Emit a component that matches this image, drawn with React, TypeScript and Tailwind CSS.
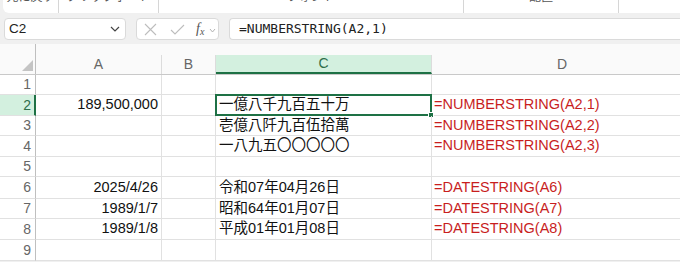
import React from "react";

const FONT = "font-['Liberation_Sans','Noto_Sans_CJK_JP',sans-serif]";

type Row = { n: number; a?: string; c?: string; d?: string; h: string };

const rows: Row[] = [
  { n: 1, h: "h-[20px]" },
  { n: 2, a: "189,500,000", c: "一億八千九百五十万", d: "=NUMBERSTRING(A2,1)", h: "h-[21px]" },
  { n: 3, c: "壱億八阡九百伍拾萬", d: "=NUMBERSTRING(A2,2)", h: "h-[20px]" },
  { n: 4, c: "一八九五〇〇〇〇〇", d: "=NUMBERSTRING(A2,3)", h: "h-[21px]" },
  { n: 5, h: "h-[20px]" },
  { n: 6, a: "2025/4/26", c: "令和07年04月26日", d: "=DATESTRING(A6)", h: "h-[22px]" },
  { n: 7, a: "1989/1/7", c: "昭和64年01月07日", d: "=DATESTRING(A7)", h: "h-[20px]" },
  { n: 8, a: "1989/1/8", c: "平成01年01月08日", d: "=DATESTRING(A8)", h: "h-[21px]" },
  { n: 9, h: "h-[21px]" },
];

export default function App() {
  return (
    <div className={`w-[680px] h-[262px] overflow-hidden bg-[#f0f0f0] ${FONT}`}>
      {/* Ribbon group labels (cut off at top) */}
      <div className="ml-[3px] h-[13px] bg-white rounded-bl-[6px] overflow-hidden flex text-[12px] text-[#555]">
        <div className="w-[56px] h-[13px] border-r border-[#d6d6d6] flex justify-center">
          <span className="-mt-[11px] leading-[16px]">元に戻す</span>
        </div>
        <div className="w-[100px] h-[13px] border-r border-[#d6d6d6] flex justify-center">
          <span className="-mt-[11px] leading-[16px]">クリップボード</span>
        </div>
        <div className="w-[305px] h-[13px] border-r border-[#d6d6d6] flex justify-center">
          <span className="-mt-[11px] leading-[16px]">フォント</span>
        </div>
        <div className="w-[155px] h-[13px] border-r border-[#d6d6d6] flex justify-center">
          <span className="-mt-[11px] leading-[16px]">配置</span>
        </div>
        <div className="flex-1" />
      </div>

      {/* Formula bar */}
      <div className="mt-[5px] h-[22px] flex pl-[4px] gap-[10px]">
        <div className="w-[122px] h-[22px] bg-white border border-[#dadada] rounded-[4px] flex items-center justify-between pl-[4px] pr-[5px]">
          <span className="text-[13.5px] text-[#222]">C2</span>
          <svg width="10" height="6" viewBox="0 0 10 6">
            <path d="M1 1 L5 5 L9 1" stroke="#444" strokeWidth="1.2" fill="none" />
          </svg>
        </div>
        <div className="w-[83px] h-[22px] bg-white border border-[#dadada] rounded-[4px] flex items-center pl-[7px]">
          <svg width="13" height="13" viewBox="0 0 13 13">
            <path d="M1 1 L12 12 M12 1 L1 12" stroke="#bdbdbd" strokeWidth="1.1" fill="none" />
          </svg>
          <svg width="15" height="11" viewBox="0 0 15 11" className="ml-[13px]">
            <path d="M1 6 L5 10 L14 1" stroke="#bdbdbd" strokeWidth="1.1" fill="none" />
          </svg>
          <span className="ml-[11px] font-['Liberation_Serif',serif] italic text-[14px] text-[#555] leading-none">
            f<span className="text-[10px] relative top-[2px]">x</span>
          </span>
          <svg width="7" height="5" viewBox="0 0 7 5" className="ml-[5px] mt-[2px]">
            <path d="M1 1 L3.5 4 L6 1" stroke="#aaa" strokeWidth="0.9" fill="none" />
          </svg>
        </div>
        <div className="flex-1 h-[22px] bg-white border border-[#dadada] border-r-0 rounded-l-[4px] flex items-center pl-[9px]">
          <span className="font-['DejaVu_Sans_Mono',monospace] text-[13px] text-[#222]">=NUMBERSTRING(A2,1)</span>
        </div>
      </div>

      {/* Grid */}
      <div className="mt-[4px] bg-white">
        {/* Header */}
        <div className="flex h-[31px] bg-[#fafafa] border-b border-[#c9c9c9]">
          <div className="w-[36px] shrink-0 border-r border-[#bfbfbf] relative">
            <svg width="11" height="11" viewBox="0 0 11 11" className="absolute right-[2px] bottom-[3px]">
              <path d="M11 0 L11 11 L0 11 Z" fill="#c4c4c4" />
            </svg>
          </div>
          <div className="flex mt-[11px] h-[19px] text-[14px] text-[#666]">
            <div className="w-[126px] border-r border-[#dcdcdc] flex items-center justify-center">A</div>
            <div className="w-[54px] border-r border-[#dcdcdc] flex items-center justify-center">B</div>
            <div className="w-[216px] bg-[#d3f0df] border-b-2 border-[#1e7145] flex items-center justify-center text-[#2e6e4a] border-r border-r-[#dcdcdc]">
              C
            </div>
            <div className="w-[260px] flex items-center justify-center">D</div>
          </div>
        </div>

        {rows.map((r) => {
          const sel = r.n === 2;
          return (
            <div key={r.n} className={`flex ${r.h}`}>
              <div
                className={`w-[36px] shrink-0 flex items-center justify-end pr-[4px] text-[14px] border-b border-[#e1e1e1] ${
                  sel ? "bg-[#d3f0df] text-[#2e6e4a] border-r-2 border-r-[#1e7145]" : "text-[#666] border-r border-r-[#bfbfbf]"
                }`}
              >
                <span className={sel ? "mr-[-1px]" : ""}>{r.n}</span>
              </div>
              <div className="w-[126px] shrink-0 border-r border-b border-[#e1e1e1] flex items-center justify-end pr-[3px] text-[14.5px] text-[#111]">
                {r.a}
              </div>
              <div className="w-[54px] shrink-0 border-r border-b border-[#e1e1e1]" />
              <div className="w-[216px] shrink-0 border-r border-b border-[#e1e1e1] flex items-center pl-[3px] text-[14.5px] text-[#111] relative whitespace-nowrap">
                {r.c}
                {sel && (
                  <div className="absolute left-[-1px] top-[-1px] right-[-1px] bottom-[-1px] border-2 border-[#1e7145]">
                    <div className="absolute right-[-4px] bottom-[-4px] w-[6px] h-[6px] bg-[#1e7145] border border-white" />
                  </div>
                )}
              </div>
              <div className="w-[260px] shrink-0 border-b border-[#e1e1e1] flex items-center pl-[2px] text-[14.5px] text-[#c81e1e] whitespace-nowrap">
                {r.d}
              </div>
            </div>
          );
        })}
      </div>
    </div>
  );
}
